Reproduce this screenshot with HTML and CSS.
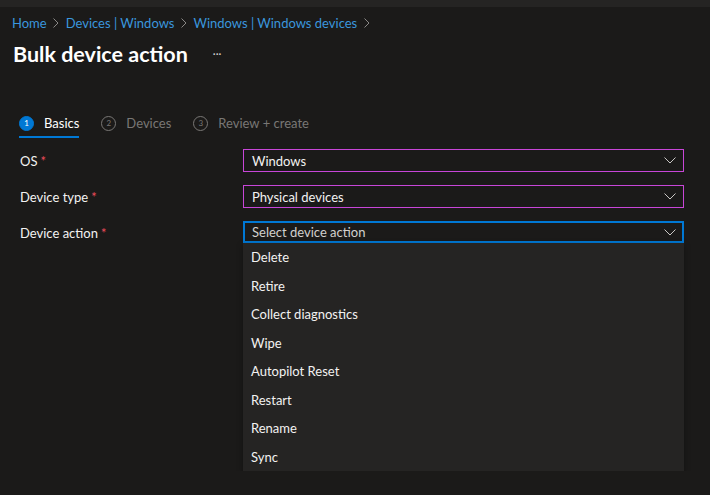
FILE: index.html
```html
<!DOCTYPE html>
<html lang="en">
<head>
    <meta charset="UTF-8">
    <meta name="viewport" content="width=device-width, initial-scale=1.0">
    <title>Bulk device action</title>
    <link rel="stylesheet" href="styles.css">
</head>
<body>
    <div class="topbar"></div>

    <div class="page">
        <!-- Breadcrumb -->
        <nav class="breadcrumb">
            <a href="#">Home</a>
            <svg class="sep" width="6" height="10" viewBox="0 0 6 10"><path d="M0.5 0.5 L5 5 L0.5 9.5" fill="none" stroke="#8a8886" stroke-width="1"/></svg>
            <a href="#">Devices | Windows</a>
            <svg class="sep" width="6" height="10" viewBox="0 0 6 10"><path d="M0.5 0.5 L5 5 L0.5 9.5" fill="none" stroke="#8a8886" stroke-width="1"/></svg>
            <a href="#">Windows | Windows devices</a>
            <svg class="sep" width="6" height="10" viewBox="0 0 6 10"><path d="M0.5 0.5 L5 5 L0.5 9.5" fill="none" stroke="#8a8886" stroke-width="1"/></svg>
        </nav>

        <div class="title-row">
            <h1>Bulk device action</h1>
            <span class="more">&middot;&middot;&middot;</span>
        </div>

        <!-- Wizard steps -->
        <div class="steps">
            <div class="step active">
                <span class="num">1</span>
                <span class="label">Basics</span>
            </div>
            <div class="step">
                <span class="num">2</span>
                <span class="label">Devices</span>
            </div>
            <div class="step">
                <span class="num">3</span>
                <span class="label">Review + create</span>
            </div>
        </div>

        <!-- Form -->
        <div class="form">
            <label class="field-label">OS <span class="req">*</span></label>
            <div class="select filled">
                <span>Windows</span>
                <svg class="chev" width="12" height="7" viewBox="0 0 12 7"><path d="M0.5 0.5 L6 6 L11.5 0.5" fill="none" stroke="#c8c6c4" stroke-width="1"/></svg>
            </div>

            <label class="field-label">Device type <span class="req">*</span></label>
            <div class="select filled">
                <span>Physical devices</span>
                <svg class="chev" width="12" height="7" viewBox="0 0 12 7"><path d="M0.5 0.5 L6 6 L11.5 0.5" fill="none" stroke="#c8c6c4" stroke-width="1"/></svg>
            </div>

            <label class="field-label">Device action <span class="req">*</span></label>
            <div class="dropdown">
                <div class="select focused">
                    <span>Select device action</span>
                    <svg class="chev" width="12" height="7" viewBox="0 0 12 7"><path d="M0.5 0.5 L6 6 L11.5 0.5" fill="none" stroke="#c8c6c4" stroke-width="1"/></svg>
                </div>
                <ul class="options">
                    <li>Delete</li>
                    <li>Retire</li>
                    <li>Collect diagnostics</li>
                    <li>Wipe</li>
                    <li>Autopilot Reset</li>
                    <li>Restart</li>
                    <li>Rename</li>
                    <li>Sync</li>
                </ul>
            </div>
        </div>
    </div>
</body>
</html>
```

FILE: styles.css
```css
body {
    margin: 0;
    background-color: #1b1a19;
    color: #f3f2f1;
    font-family: 'Segoe UI', Lato, 'Noto Sans', sans-serif;
    font-size: 13px;
}

.topbar {
    height: 7px;
    background-color: #252423;
}

.page {
    padding: 0 26px 0 12px;
}

/* Breadcrumb */
.breadcrumb {
    display: flex;
    align-items: center;
    gap: 6.5px;
    height: 18px;
    margin-top: 7px;
}

.breadcrumb a {
    color: #3a96dd;
    text-decoration: none;
}

.title-row {
    display: flex;
    align-items: center;
    height: 30px;
    margin-top: 7px;
    padding-left: 1px;
}

h1 {
    margin: 0;
    font-size: 21.5px;
    font-weight: 700;
    color: #ffffff;
}

.more {
    margin-left: 25px;
    font-size: 11px;
    color: #d2d0ce;
    position: relative;
    top: -1px;
}

/* Wizard steps */
.steps {
    display: flex;
    gap: 22px;
    margin-top: 39px;
    padding-left: 7px;
}

.step {
    display: flex;
    align-items: center;
    gap: 10px;
    height: 30px;
    color: #797775;
    font-size: 13px;
}

.step .num {
    width: 13px;
    height: 13px;
    border: 1px solid #797775;
    border-radius: 50%;
    font-size: 8px;
    display: flex;
    align-items: center;
    justify-content: center;
}

.step.active {
    color: #ffffff;
    box-shadow: inset 0 -2px 0 #0078d4;
}

.step.active .num {
    background-color: #0078d4;
    border-color: #0078d4;
    color: #ffffff;
}

/* Form */
.form {
    display: grid;
    grid-template-columns: 223px 1fr;
    row-gap: 13px;
    margin-top: 11px;
    padding-left: 8px;
    align-items: start;
}

.field-label {
    height: 23px;
    display: flex;
    align-items: center;
    gap: 3px;
}

.req {
    color: #ec4b5a;
}

.select {
    height: 23px;
    box-sizing: border-box;
    border: 1px solid #c846d8;
    display: flex;
    align-items: center;
    justify-content: space-between;
    padding: 0 7px 0 8px;
}

.select.focused {
    border: 2px solid #0078d4;
    height: 22px;
    padding: 0 6px 0 7px;
    color: #d2d0ce;
}

.options {
    list-style: none;
    margin: 0;
    padding: 0;
    background-color: #252423;
    box-shadow: 0 2px 6px rgba(0, 0, 0, 0.35);
}

.options li {
    height: 28.5px;
    line-height: 28.5px;
    padding-left: 8px;
}
```
